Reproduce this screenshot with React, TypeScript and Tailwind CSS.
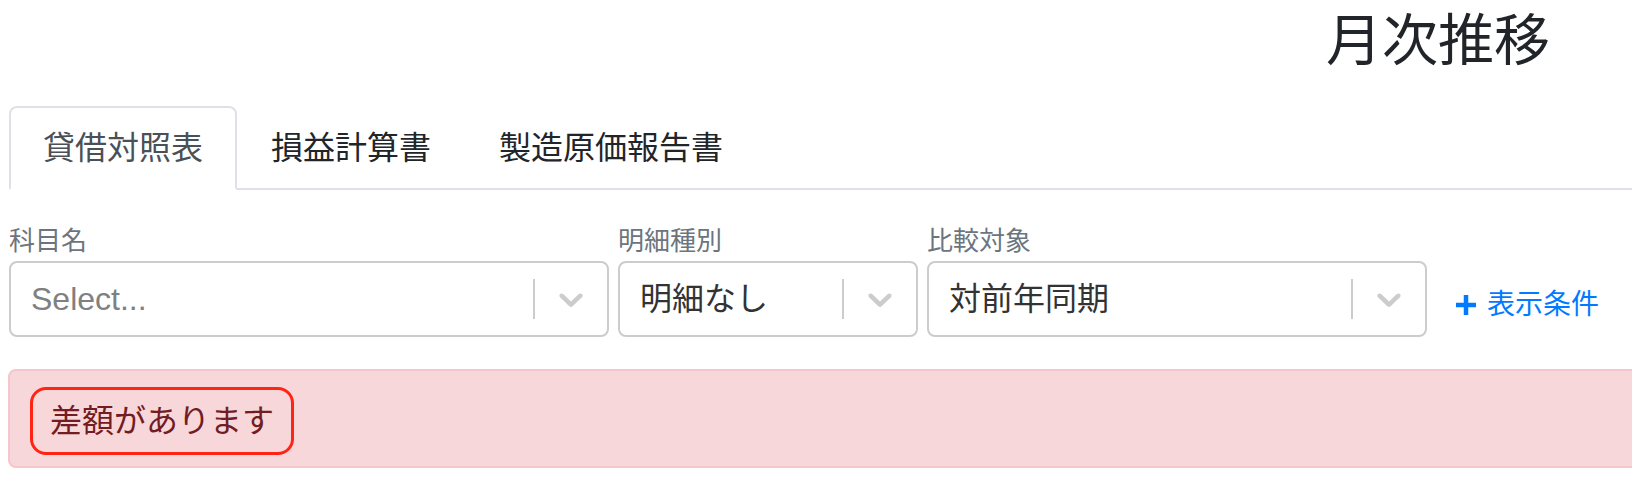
const font = {
  fontFamily: '"Liberation Sans", "Noto Sans CJK JP", sans-serif',
};

const Chevron = () => (
  <svg viewBox="0 0 20 20" className="w-[40px] h-[40px] fill-[#cccccc]">
    <path d="M4.516 7.548c0.436-0.446 1.043-0.481 1.576 0l3.908 3.747 3.908-3.747c0.533-0.481 1.141-0.446 1.574 0 0.436 0.445 0.408 1.197 0 1.615-0.406 0.418-4.695 4.502-4.695 4.502-0.217 0.223-0.502 0.335-0.787 0.335s-0.57-0.112-0.789-0.335c0 0-4.287-4.084-4.695-4.502s-0.436-1.17 0-1.615z" />
  </svg>
);

const SelectBox = ({
  label,
  value,
  placeholder,
  width,
}: {
  label: string;
  value?: string;
  placeholder?: string;
  width: string;
}) => (
  <div className={width}>
    <div className="text-[26px] leading-[39px] text-[#6c757d]">{label}</div>
    <div className="flex h-[76px] border-2 border-[#cccccc] rounded-[8px] bg-white">
      <div className="flex-1 flex items-center pl-[20px] text-[32px] leading-[48px]">
        {value ? (
          <span className="text-[#333333]">{value}</span>
        ) : (
          <span className="text-[#808080]">{placeholder}</span>
        )}
      </div>
      <div className="flex items-stretch">
        <span className="w-[2px] my-[16px] bg-[#cccccc]" />
        <span className="flex items-center px-[16px]">
          <Chevron />
        </span>
      </div>
    </div>
  </div>
);

const App = () => {
  const tabs = ["貸借対照表", "損益計算書", "製造原価報告書"];

  return (
    <div
      className="w-[1632px] h-[479px] bg-white overflow-hidden text-[#212529]"
      style={font}
    >
      <div className="h-[106px] flex justify-end pr-[82px] pt-[7px]">
        <h1 className="text-[56px] leading-[67px] font-normal">月次推移</h1>
      </div>

      <ul className="flex ml-[9px] border-b-2 border-[#dee2e6]">
        {tabs.map((t, i) => (
          <li
            key={t}
            className={
              i === 0
                ? "-mb-[2px] border-2 border-[#dee2e6] border-b-white rounded-t-[8px] bg-white px-[32px] py-[16px] text-[32px] leading-[48px] text-[#495057]"
                : "-mb-[2px] border-2 border-transparent px-[32px] py-[16px] text-[32px] leading-[48px] text-[#212529]"
            }
          >
            {t}
          </li>
        ))}
      </ul>

      <div className="flex items-end gap-[9px] ml-[9px] mt-[32px]">
        <SelectBox label="科目名" placeholder="Select..." width="w-[600px]" />
        <SelectBox label="明細種別" value="明細なし" width="w-[300px]" />
        <SelectBox label="比較対象" value="対前年同期" width="w-[500px]" />
        <a className="ml-[19px] mb-[11px] flex items-center gap-[10px] text-[28px] leading-[42px] text-[#007bff]">
          <svg viewBox="0 0 22 22" className="w-[22px] h-[22px]">
            <path d="M11 1v20M1 11h20" stroke="#007bff" strokeWidth="4.5" />
          </svg>
          表示条件
        </a>
      </div>

      <div className="ml-[8px] mt-[32px] w-[1640px] border-2 border-[#f5c6cb] rounded-[8px] bg-[#f8d7da] pl-[20px] pt-[16px] pb-[11px]">
        <span className="inline-block border-[3px] border-[#ff2414] rounded-[16px] px-[17px] py-[7px] text-[32px] leading-[48px] text-[#721c24]">
          差額があります
        </span>
      </div>
    </div>
  );
};

export default App;
